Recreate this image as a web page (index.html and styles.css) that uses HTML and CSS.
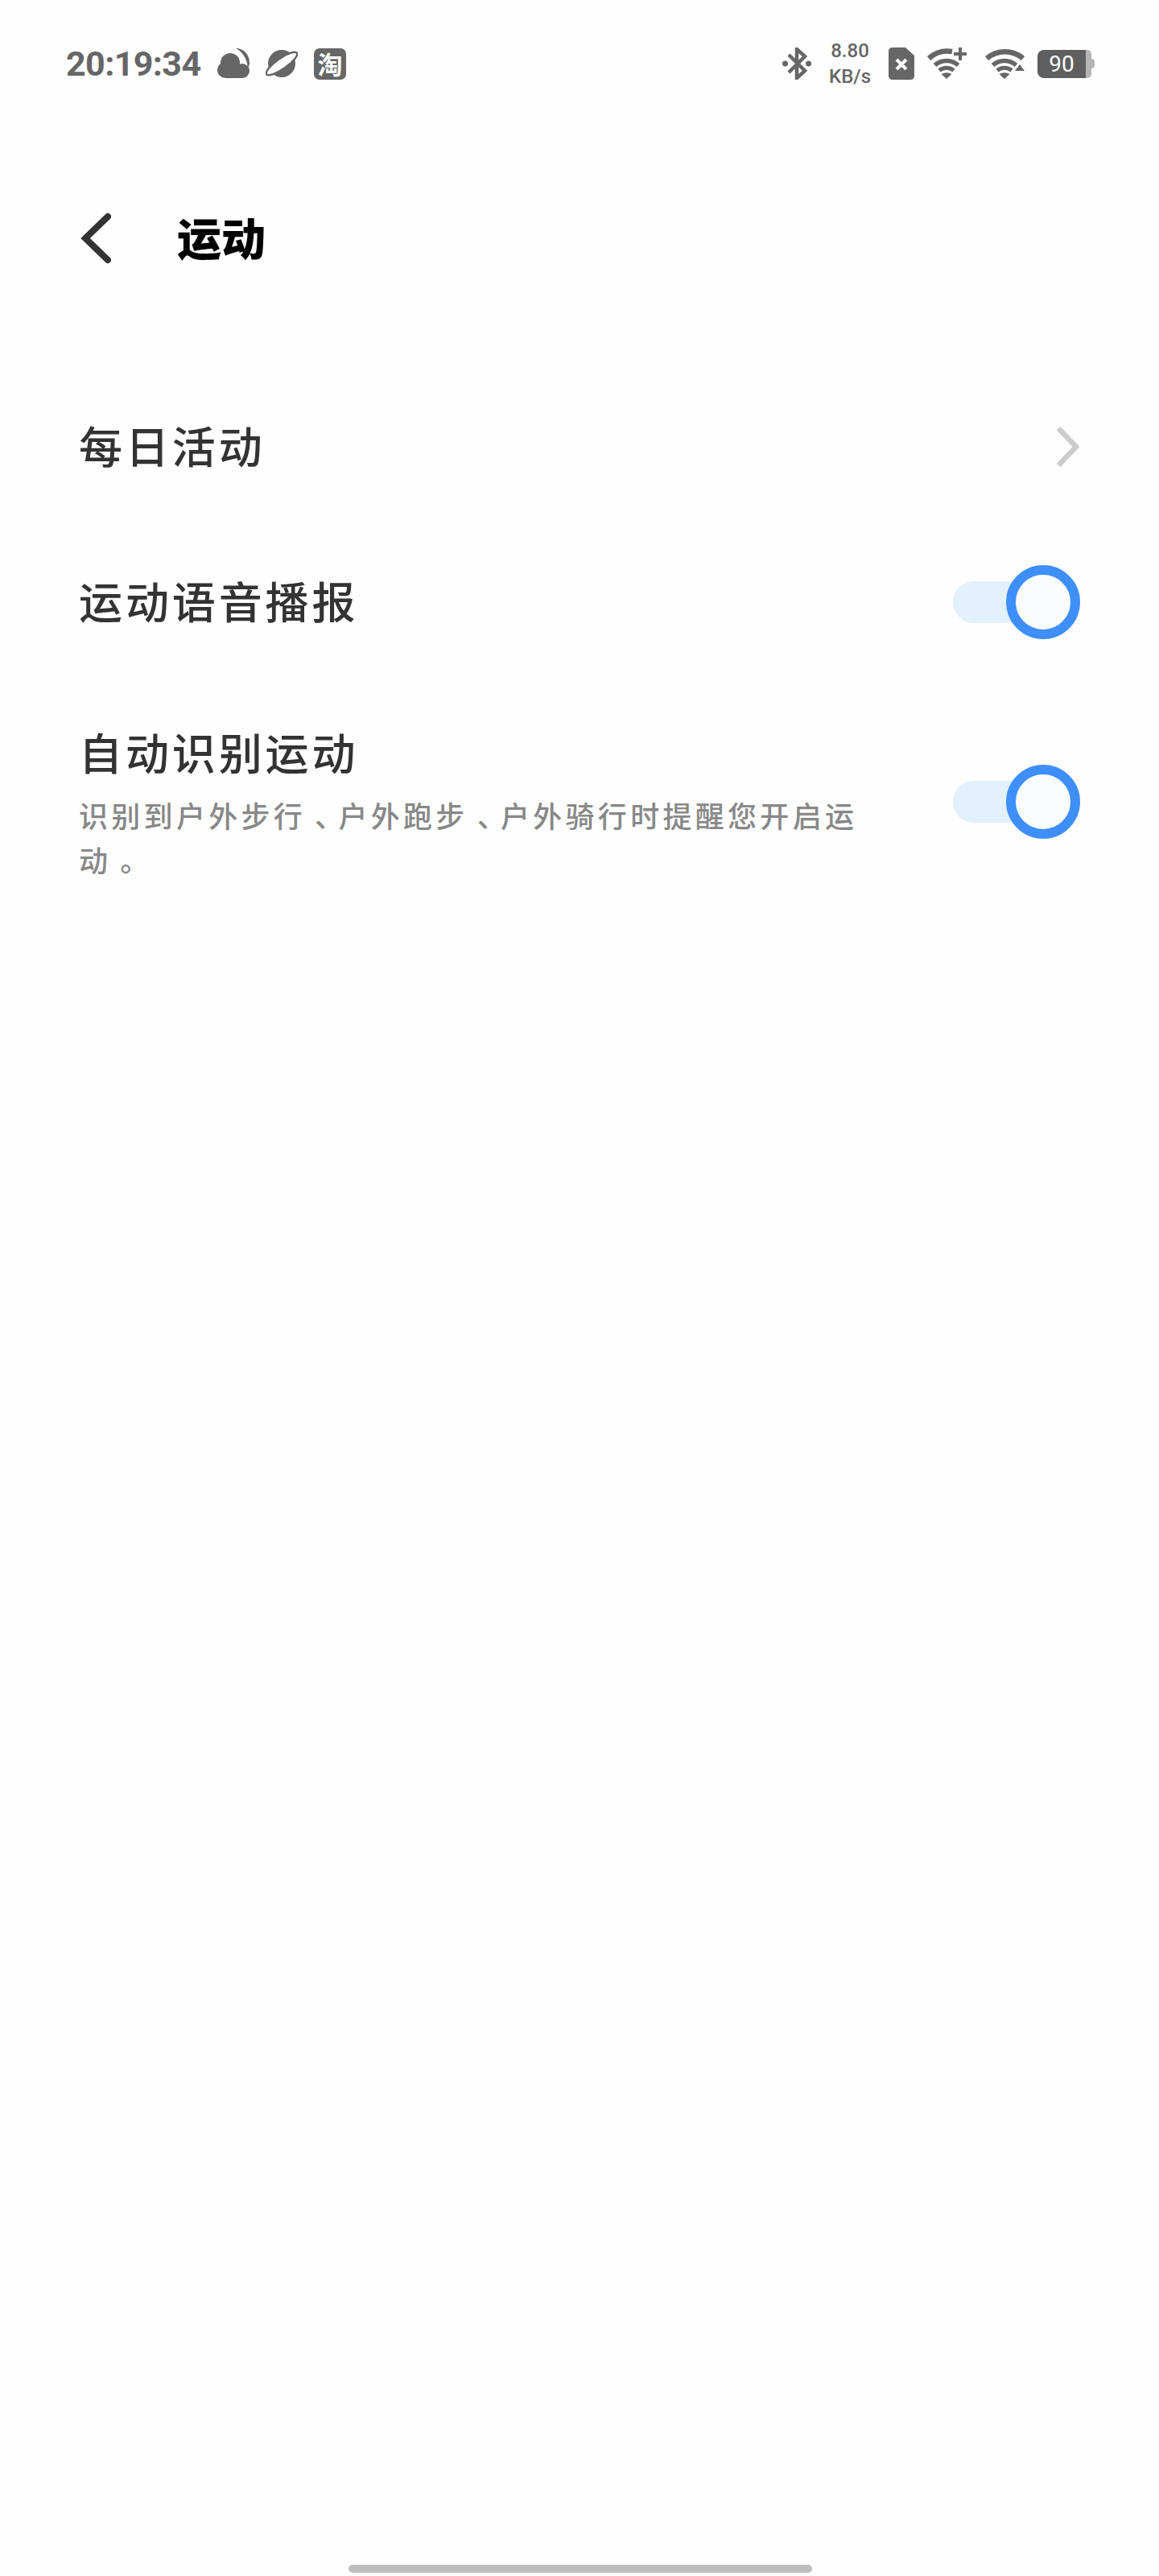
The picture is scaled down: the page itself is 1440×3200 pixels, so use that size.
FILE: index.html
```html
<!DOCTYPE html>
<html lang="zh-CN">
<head>
<meta charset="utf-8">
<title>运动</title>
<link rel="stylesheet" href="styles.css">
</head>
<body>
<div class="screen">
  <header class="status">
    <div class="status-left">
      <span class="time">20:19:34</span>
      <svg class="ic" width="40" height="38" viewBox="0 0 40 38"><path fill="#666" d="M23 0C33 0 40 8 40 18c0 2-1 5-2 7C37 13 32 5 23 0z"/><circle cx="16" cy="18" r="12" fill="#666"/><circle cx="10" cy="27" r="10" fill="#666"/><circle cx="31" cy="28" r="9" fill="#666"/><rect x="10" y="24" width="21" height="13" fill="#666"/></svg>
      <svg class="ic" width="40" height="38" viewBox="0 0 40 38"><circle cx="20" cy="19" r="17" fill="#666"/><ellipse cx="20" cy="19" rx="23" ry="6.500" fill="#fff" stroke="#666" stroke-width="2.500" transform="rotate(-35 20 19)"/></svg>
      <span class="tao">淘</span>
    </div>
    <div class="status-right">
      <svg class="ic" width="36" height="40" viewBox="0 0 36 40"><path fill="none" stroke="#666" stroke-width="4.500" d="M8 9l20 20-10 9V2l10 9L8 31"/><circle cx="3.500" cy="20" r="3.500" fill="#666"/><circle cx="32.500" cy="20" r="3.500" fill="#666"/></svg>
      <div class="speed"><span>8.80</span><span>KB/s</span></div>
      <svg class="ic" width="32" height="40" viewBox="0 0 32 40"><path fill="#666" d="M5 0h16l11 10v25q0 5-5 5H5q-5 0-5-5V5q0-5 5-5z"/><path stroke="#fff" stroke-width="4" d="M10 15l12 12M22 15 10 27"/></svg>
      <svg class="ic tight" width="50" height="40" viewBox="0 0 50 40"><g fill="none" stroke="#666"><path stroke-width="6.500" d="M2 13.500A34.500 34.500 0 0 1 31 5"/><path stroke-width="5.500" d="M9.500 22A22 22 0 0 1 38.500 22"/><path stroke-width="5" d="M15 28.500A14 14 0 0 1 33 28.500"/><path stroke-width="4" d="M41 0v16M33 8h16"/></g><path fill="#666" d="M24 39l-6.500-6q6.500-3.500 13 0z"/></svg>
      <svg class="ic" width="49" height="40" viewBox="0 0 49 40"><g fill="none" stroke="#666"><path stroke-width="6.500" d="M2 13.500A34.500 34.500 0 0 1 47 13.500"/><path stroke-width="5.500" d="M9.500 22A22 22 0 0 1 38.500 22"/><path stroke-width="5" d="M15 28.500A14 14 0 0 1 33 28.500"/></g><path fill="#666" d="M24 39l-6.500-6q6.500-3.500 13 0zM37 29l6-8 6 8z"/></svg>
      <div class="battery tight"><div class="batt-body">90</div><div class="batt-side"></div><div class="batt-cap"></div></div>
    </div>
  </header>

  <nav class="title-bar">
    <svg class="back" width="40" height="64" viewBox="0 0 40 64"><path fill="none" stroke="#333" stroke-width="8" stroke-linecap="round" stroke-linejoin="miter" d="M36 5 8 32l28 27"/></svg>
    <h1 class="title">运动</h1>
  </nav>

  <main class="list">
    <div class="row row-daily">
      <div class="label">每日活动</div>
      <svg class="chev" width="31" height="50" viewBox="0 0 31 50"><path fill="none" stroke="#ccc" stroke-width="6.500" d="M4 2l22 23L4 48"/></svg>
    </div>
    <div class="row row-voice">
      <div class="label">运动语音播报</div>
      <div class="switch"><div class="knob"></div></div>
    </div>
    <div class="row row-auto">
      <div class="text">
        <div class="label">自动识别运动</div>
        <div class="desc">识别到户外步行<span class="punct">、</span>户外跑步<span class="punct">、</span>户外骑行时提醒您开启运<br>动<span class="punct">。</span></div>
      </div>
      <div class="switch switch-auto"><div class="knob"></div></div>
    </div>
  </main>
  <div class="home-bar"></div>
</div>
</body>
</html>
```
FILE: styles.css
```css
* { box-sizing: border-box; }
html, body { margin: 0; padding: 0; background: #fefefe; }
body { font-family: "Noto Sans CJK SC", "Noto Sans", sans-serif; }
.screen { width: 1440px; height: 3200px; display: flex; flex-direction: column; position: relative; overflow: hidden; }
.status { display: flex; justify-content: space-between; align-items: center; height: 40px; margin-top: 59px; padding: 0 80px 0 82px; color: #666; }
.status-left, .status-right { display: flex; align-items: center; }
.status-left { gap: 20px; }
.status-right { gap: 22px; }
.tight { margin-left: -6px; }
.time { width: 168px; white-space: nowrap; font-family: Roboto, sans-serif; font-weight: 700; font-size: 43px; line-height: 40px; letter-spacing: -0.6px; }
.ic { display: block; flex: none; }
.tao { width: 40px; height: 39px; border-radius: 7px; background: #666; color: #fff; font-size: 31px; line-height: 38px; text-align: center; font-weight: 700; }
.speed { width: 52px; display: flex; flex-direction: column; align-items: center; font-family: Roboto, sans-serif; font-weight: 500; font-size: 24px; line-height: 32px; white-space: nowrap; }
.battery { display: flex; align-items: center; }
.batt-body { width: 60px; height: 35px; background: #5f5f5f; color: #fff; border-radius: 8px 0 0 8px; font-family: Roboto, sans-serif; font-size: 28px; line-height: 35px; text-align: center; }
.batt-side { width: 7px; height: 35px; background: #b5b5b5; border-radius: 0 5px 5px 0; }
.batt-cap { width: 4px; height: 12px; background: #b5b5b5; border-radius: 0 4px 4px 0; }
.title-bar { display: flex; align-items: center; height: 64px; margin-top: 165px; padding-left: 98px; }
.back { display: block; }
.title { margin: 0 0 7px 82px; font-size: 55px; line-height: 64px; font-weight: 900; color: #000; }
.list { display: flex; flex-direction: column; margin-top: 197px; padding: 0 98px; }
.row { display: flex; justify-content: space-between; align-items: center; }
.row-daily { height: 60px; }
.row-voice { height: 92px; margin-top: 117px; }
.row-auto { margin-top: 105px; align-items: flex-start; }
.label { font-size: 54px; line-height: 66px; font-weight: 500; color: #333; letter-spacing: 3.900px; margin-bottom: 4px; }
.row-auto .label { line-height: 70px; margin-bottom: 0; }
.text { width: 980px; }
.desc { font-size: 36px; line-height: 55px; font-weight: 500; color: #888; letter-spacing: 4.300px; margin-top: 16px; }
.punct { margin-left: 11px; letter-spacing: -6.700px; }
.switch { width: 158px; height: 52px; border-radius: 26px; background: #e3f0fe; position: relative; flex: none; }
.switch-auto { margin-top: 71px; }
.knob { position: absolute; right: 0; top: -20px; width: 92px; height: 92px; border-radius: 50%; background: #fbfcfe; border: 12px solid #3e8ffb; }
.home-bar { position: absolute; left: 433px; top: 3186px; width: 576px; height: 10px; border-radius: 5px; background: #bfbfbf; }
```
